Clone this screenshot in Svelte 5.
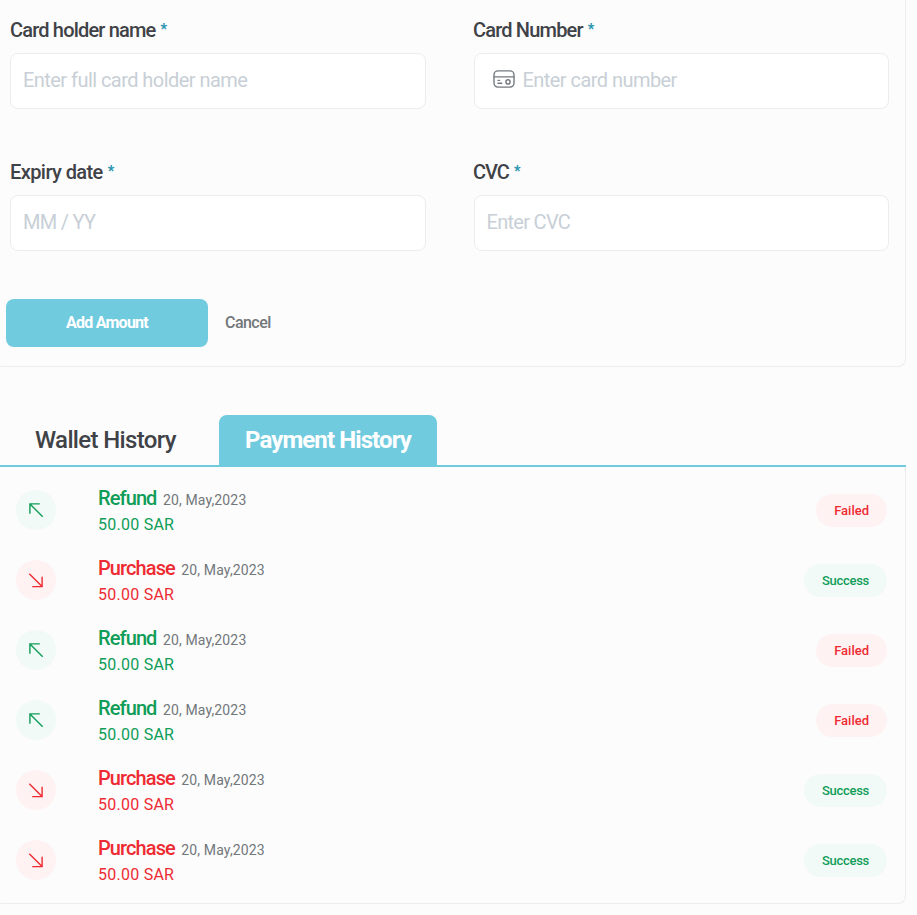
<script>
  const fields = [
    { label: 'Card holder name', hint: 'Enter full card holder name', kind: 'holder' },
    { label: 'Card Number', hint: 'Enter card number', kind: 'number' },
    { label: 'Expiry date', hint: 'MM / YY', kind: 'expiry' },
    { label: 'CVC', hint: 'Enter CVC', kind: 'cvc' }
  ];
  const payments = [
    { type: 'Refund', status: 'Failed' },
    { type: 'Purchase', status: 'Success' },
    { type: 'Refund', status: 'Failed' },
    { type: 'Refund', status: 'Failed' },
    { type: 'Purchase', status: 'Success' },
    { type: 'Purchase', status: 'Success' }
  ];
</script>

<main>
  <section class="form">
    <div class="grid">
      {#each fields as f}
        <div class="field {f.kind}">
          <div class="label"><span class="name">{f.label}</span><span class="star">*</span></div>
          <div class="input">
            {#if f.kind === 'number'}
              <svg class="card" width="22" height="18" viewBox="0 0 22 18" fill="none" stroke="#747980" stroke-width="1.4" stroke-linecap="round">
                <rect x="1" y="0.9" width="20" height="16.2" rx="4" />
                <path d="M1 6.9H21M5 10.4h1.6M5 13.2h3.8" />
                <circle cx="15" cy="11.9" r="2.1" />
              </svg>
            {/if}
            <span class="hint">{f.hint}</span>
          </div>
        </div>
      {/each}
    </div>
    <div class="actions">
      <button class="add"><span>Add Amount</span></button>
      <button class="cancel"><span>Cancel</span></button>
    </div>
  </section>

  <nav>
    <div class="tab wallet"><span>Wallet History</span></div>
    <div class="tab active"><span>Payment History</span></div>
  </nav>

  <section class="history">
    {#each payments as p}
      <div class="row {p.type.toLowerCase()}">
        <div class="dot">
          <svg width="16" height="16" viewBox="0 0 16 16" fill="none" stroke="currentColor" stroke-width="1.4">
            {#if p.type === 'Refund'}
              <path d="M11.8 1.9H1.9V11.8M1.9 1.9L14.7 14.7" />
            {:else}
              <path d="M4.2 14.6H14.1V4.7M14.1 14.6L1.3 1.8" />
            {/if}
          </svg>
        </div>
        <div class="info">
          <div class="top"><span class="type">{p.type}</span><span class="date">20, May,2023</span></div>
          <div class="amount">50.00 SAR</div>
        </div>
        <div class="badge {p.status.toLowerCase()}"><span>{p.status}</span></div>
      </div>
    {/each}
  </section>
</main>

<style>
  :global(body) { background: #fcfcfc; overflow: hidden; }
  main {
    width: 917px; height: 915px; box-sizing: border-box; overflow: hidden;
    background: #fcfcfc; font-family: Roboto, "Noto Sans", sans-serif; color: #3f4247;
    white-space: nowrap;
  }
  .form {
    box-sizing: border-box; width: 911px; height: 367px; margin-left: -5px;
    padding: 16px 16px 0 15px;
    border: 1px solid #ededed; border-top: 0; border-radius: 0 0 8px 8px;
  }
  .grid { display: grid; grid-template-columns: 416px 416px; column-gap: 47px; row-gap: 49px; margin-left: -1px; }
  .field { height: 93px; }
  .label { display: flex; height: 28px; line-height: 28px; font-size: 20px; font-weight: 500; letter-spacing: -0.82px; }
  .expiry .label { letter-spacing: -0.58px; }
  .cvc .label { letter-spacing: -1px; }
  .star { margin-left: 5px; color: #2b96b0; font-size: 14px; line-height: 27px; font-weight: 900; letter-spacing: 0; }
  .input {
    box-sizing: border-box; display: flex; align-items: center; height: 56px; margin-top: 9px;
    padding: 0 12px 2px; background: #fff; border: 1px solid #ededed; border-radius: 8px;
    font-size: 20px; color: #c8cfd6; letter-spacing: -0.55px;
  }
  .expiry .input, .cvc .input { letter-spacing: -0.7px; }
  .number .input, .cvc .input { margin-left: 1px; padding-left: 11.5px; }
  .card { margin: 0 7.5px 2px 6.5px; }
  .actions { display: flex; margin: 48px 0 0 -5px; }
  button { display: block; border: 0; padding: 0; height: 48px; font: 500 16px/48px Roboto, sans-serif; }
  .add { width: 202px; background: #71cbdf; color: #fff; border-radius: 8px; font-weight: 700; letter-spacing: -0.75px; }
  .cancel { margin-left: 17px; background: none; color: #72777b; letter-spacing: -0.55px; }
  nav {
    display: flex; box-sizing: border-box; width: 906px; height: 52px; margin-top: 48px;
    border-bottom: 2px solid #71cbdf; font-size: 24px; line-height: 50px; font-weight: 500; letter-spacing: -0.65px;
  }
  .wallet { width: 184px; padding-left: 35px; }
  .active { width: 192px; padding-left: 26px; background: #71cbdf; color: #fff; border-radius: 8px 8px 0 0; font-weight: 700; letter-spacing: -0.9px; }
  .history {
    box-sizing: border-box; width: 911px; height: 437px; margin-left: -5px; padding: 8px 18px 0 21px;
    border: 1px solid #ededed; border-top: 0; border-radius: 0 0 8px 8px;
  }
  .row { display: flex; align-items: center; height: 70px; margin-left: -1px; }
  .dot { display: grid; place-items: center; width: 40px; height: 40px; border-radius: 50%; }
  .info { margin-left: 42px; padding-top: 4px; flex: 1; }
  .top { display: flex; height: 27px; line-height: 27px; }
  .type { font-size: 20px; font-weight: 500; letter-spacing: -0.9px; }
  .date { margin-left: 6.4px; padding-top: 2px; font-size: 14px; color: #72777b; letter-spacing: 0.14px; }
  .amount { height: 27px; line-height: 25px; font-size: 16px; letter-spacing: 0.25px; }
  .refund { color: #0f9d58; }
  .purchase { color: #ee2b33; }
  .refund .dot, .success { background: #f1faf6; }
  .purchase .dot, .failed { background: #fff2f2; }
  .badge { display: grid; place-items: center; height: 33px; padding: 0 18px; border-radius: 17px; font-size: 13px; font-weight: 500; }
  .row .failed { color: #ee2b33; }
  .row .success { color: #0f9d58; letter-spacing: -0.28px; }
</style>
